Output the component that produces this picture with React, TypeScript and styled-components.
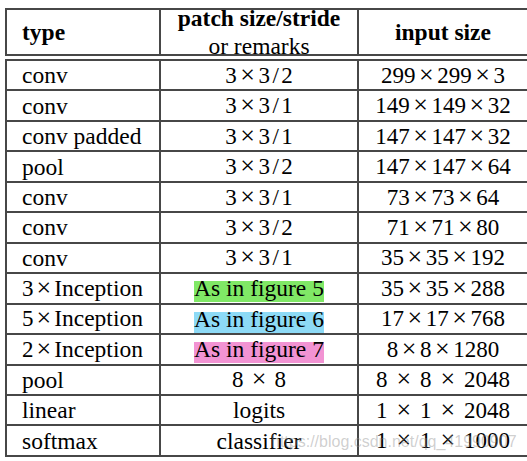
import React from 'react';
import styled, { createGlobalStyle } from 'styled-components';

const LINE = '#474747';

const Global = createGlobalStyle`
  html, body { margin: 0; padding: 0; background: #fff; overflow: hidden; }
  body { font-family: "Liberation Serif", "Times New Roman", serif; color: #000; }
`;

const Page = styled.div`
  position: relative;
  padding: 8px 0 0 5px;
  width: 529px;
  box-sizing: border-box;
`;

const Box = styled.div<{ $gap?: boolean }>`
  width: 524px;
  box-sizing: border-box;
  border-left: 2px solid ${LINE};
  border-right: 2px solid ${LINE};
  border-top: 2px solid ${LINE};
  margin-top: ${(p) => (p.$gap ? '3px' : '0')};
`;

const Row = styled.div<{ $h: number }>`
  display: grid;
  grid-template-columns: 154px 198px 168px;
  height: ${(p) => p.$h}px;
  box-sizing: border-box;
  border-bottom: 2px solid ${LINE};
  font-size: 23.5px;
  line-height: 28px;
`;

const Cell = styled.div<{ $center?: boolean; $last?: boolean; $bold?: boolean }>`
  display: flex;
  flex-direction: column;
  justify-content: center;
  align-items: ${(p) => (p.$center ? 'center' : 'flex-start')};
  padding-left: ${(p) => (p.$center ? '0' : '15px')};
  box-sizing: border-box;
  border-right: ${(p) => (p.$last ? 'none' : `2px solid ${LINE}`)};
  font-weight: ${(p) => (p.$bold ? 'bold' : 'normal')};
  white-space: nowrap;
  min-height: 0;
`;

const Line = styled.span<{ $bold?: boolean }>`
  display: block;
  line-height: 28px;
  font-weight: ${(p) => (p.$bold ? 'bold' : 'normal')};
`;

const MathText = styled.span`
  font-size: 23px;
`;

const Op = styled.span<{ $gap: number }>`
  font-size: 26px;
  margin: 0 ${(p) => p.$gap}px;
`;

const Slash = styled.span`
  margin: 0 2.5px;
`;

const Mark = styled.span<{ $color: string }>`
  display: inline-block;
  background: ${(p) => p.$color};
  line-height: 15px;
  padding-bottom: 6px;
`;

const Watermark = styled.div`
  position: absolute;
  left: 271px;
  top: 434px;
  font-family: "Liberation Sans", Arial, sans-serif;
  font-size: 16px;
  line-height: 16px;
  color: rgba(140, 140, 140, 0.42);
  white-space: nowrap;
  pointer-events: none;
`;

const M = ({ expr, gap = 3.5 }: { expr: string; gap?: number }) => {
  const tokens = expr.split(/([×/])/);
  return (
    <MathText>
      {tokens.map((t, i) =>
        t === '×' ? (
          <Op key={i} $gap={gap}>×</Op>
        ) : t === '/' ? (
          <Slash key={i}>/</Slash>
        ) : (
          <React.Fragment key={i}>{t}</React.Fragment>
        )
      )}
    </MathText>
  );
};

const TypeLabel = ({ text }: { text: string }) => {
  const m = text.match(/^(\d)×(.*)$/);
  if (!m) return <>{text}</>;
  return (
    <>
      <MathText>{m[1]}</MathText>
      <Op $gap={3}>×</Op>
      {m[2]}
    </>
  );
};

type R = { type: string; patch: React.ReactNode; input: React.ReactNode };

const WIDE = 8.9;

const rows: R[] = [
  { type: 'conv', patch: <M expr="3×3/2" />, input: <M expr="299×299×3" /> },
  { type: 'conv', patch: <M expr="3×3/1" />, input: <M expr="149×149×32" /> },
  { type: 'conv padded', patch: <M expr="3×3/1" />, input: <M expr="147×147×32" /> },
  { type: 'pool', patch: <M expr="3×3/2" />, input: <M expr="147×147×64" /> },
  { type: 'conv', patch: <M expr="3×3/1" />, input: <M expr="73×73×64" /> },
  { type: 'conv', patch: <M expr="3×3/2" />, input: <M expr="71×71×80" /> },
  { type: 'conv', patch: <M expr="3×3/1" />, input: <M expr="35×35×192" /> },
  { type: '3×Inception', patch: <Mark $color="#80e866">As in figure 5</Mark>, input: <M expr="35×35×288" /> },
  { type: '5×Inception', patch: <Mark $color="#8ddaf6">As in figure 6</Mark>, input: <M expr="17×17×768" /> },
  { type: '2×Inception', patch: <Mark $color="#f293d3">As in figure 7</Mark>, input: <M expr="8×8×1280" /> },
  { type: 'pool', patch: <M expr="8×8" gap={8.2} />, input: <M expr="8×8×2048" gap={WIDE} /> },
  { type: 'linear', patch: 'logits', input: <M expr="1×1×2048" gap={WIDE} /> },
  { type: 'softmax', patch: 'classifier', input: <M expr="1×1×1000" gap={WIDE} /> },
];

export default function App() {
  return (
    <>
      <Global />
      <Page>
        <Box>
          <Row $h={46}>
            <Cell $bold>type</Cell>
            <Cell $center>
              <Line $bold>patch size/stride</Line>
              <Line>or remarks</Line>
            </Cell>
            <Cell $center $last $bold>input size</Cell>
          </Row>
        </Box>
        <Box $gap>
          {rows.map((r, i) => (
            <Row key={i} $h={30.46}>
              <Cell>
                <span><TypeLabel text={r.type} /></span>
              </Cell>
              <Cell $center>
                <span>{r.patch}</span>
              </Cell>
              <Cell $center $last>
                <span>{r.input}</span>
              </Cell>
            </Row>
          ))}
        </Box>
        <Watermark>https://blog.csdn.net/qq_41990907</Watermark>
      </Page>
    </>
  );
}
